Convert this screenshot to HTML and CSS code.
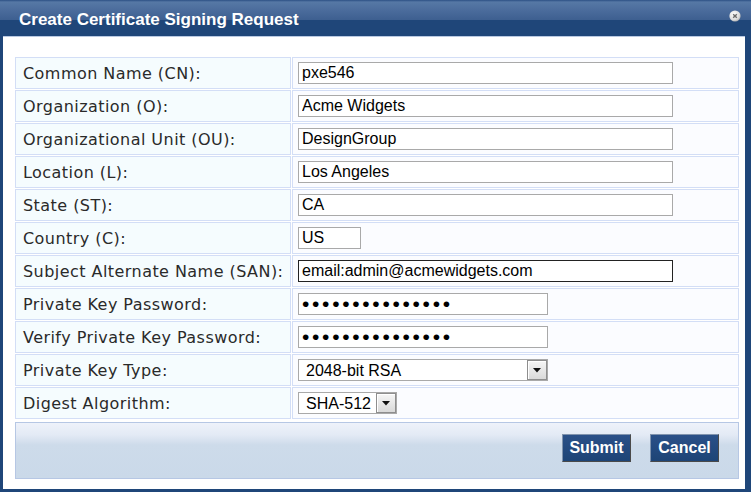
FILE: index.html
```html
<!DOCTYPE html>
<html>
<head>
<meta charset="utf-8">
<link rel="stylesheet" href="styles.css">
</head>
<body>
<div class="dialog">
  <div class="titlebar">
    <span class="title">Create Certificate Signing Request</span>
    <span class="close"><svg width="12" height="12" viewBox="0 0 12 12"><defs><radialGradient id="cg" cx="0.4" cy="0.35" r="0.7"><stop offset="0" stop-color="#ffffff"/><stop offset="0.7" stop-color="#dcdcdc"/><stop offset="1" stop-color="#a8a8a8"/></radialGradient></defs><circle cx="6" cy="6" r="5.6" fill="url(#cg)"/><path d="M4.2 4.2 L7.8 7.8 M7.8 4.2 L4.2 7.8" stroke="#6a6a6a" stroke-width="1.4"/></svg></span>
  </div>
  <div class="content">
    <table class="form">
      <tr><td class="lbl">Common Name (CN):</td><td class="val"><input class="txt wide" type="text" value="pxe546"></td></tr>
      <tr><td class="lbl">Organization (O):</td><td class="val"><input class="txt wide" type="text" value="Acme Widgets"></td></tr>
      <tr><td class="lbl">Organizational Unit (OU):</td><td class="val"><input class="txt wide" type="text" value="DesignGroup"></td></tr>
      <tr><td class="lbl">Location (L):</td><td class="val"><input class="txt wide" type="text" value="Los Angeles"></td></tr>
      <tr><td class="lbl">State (ST):</td><td class="val"><input class="txt wide" type="text" value="CA"></td></tr>
      <tr><td class="lbl">Country (C):</td><td class="val"><input class="txt short" type="text" value="US"></td></tr>
      <tr><td class="lbl">Subject Alternate Name (SAN):</td><td class="val"><input class="txt wide focus" type="text" value="email:admin@acmewidgets.com"></td></tr>
      <tr><td class="lbl">Private Key Password:</td><td class="val"><input class="txt pw" type="password" value="passwordpasswor"></td></tr>
      <tr><td class="lbl">Verify Private Key Password:</td><td class="val"><input class="txt pw" type="password" value="passwordpasswor"></td></tr>
      <tr><td class="lbl">Private Key Type:</td><td class="val"><span class="sel sel-wide"><select><option>2048-bit RSA</option></select><span class="arrow"><svg width="8" height="5" viewBox="0 0 8 5"><path d="M0 0 H8 L4 4.5 Z" fill="#111"/></svg></span></span></td></tr>
      <tr><td class="lbl">Digest Algorithm:</td><td class="val"><span class="sel sel-short"><select><option>SHA-512</option></select><span class="arrow"><svg width="8" height="5" viewBox="0 0 8 5"><path d="M0 0 H8 L4 4.5 Z" fill="#111"/></svg></span></span></td></tr>
    </table>
    <div class="footer">
      <button class="btn">Submit</button>
      <button class="btn">Cancel</button>
    </div>
  </div>
</div>
</body>
</html>
```
FILE: styles.css
```css
html, body {
  margin: 0;
  padding: 0;
}
body {
  background: #1f4679;
  width: 751px;
  height: 492px;
  overflow: hidden;
}
.dialog {
  display: flex;
  flex-direction: column;
  height: 492px;
}
.titlebar {
  height: 36px;
  flex: none;
  box-sizing: border-box;
  display: flex;
  align-items: center;
  justify-content: space-between;
  padding: 0 10px 0 19px;
  background: linear-gradient(to bottom, #2c5084 0px, #5678a5 2px, #4a6b9b 11px, #3d5f90 20px, #1f4679 20px, #1f4679 36px);
}
.title {
  color: #fff;
  font-family: "Liberation Sans", Arial, sans-serif;
  font-weight: bold;
  font-size: 17px;
  padding-top: 4px;
}
.close {
  display: flex;
  margin-top: -4px;
}
.content {
  background: #fff;
  margin: 0 6px 4px 3px;
  padding: 19px 5px 10px 11px;
  flex: 1;
  border-top: 1px solid #b9c9e2;
}
.form {
  border-collapse: separate;
  border-spacing: 1px;
  width: 726px;
}
.form td {
  height: 30px;
  padding: 0;
  border: 1px solid #d3def6;
}
.lbl {
  width: 267px;
  background: #f5fcfe;
  padding-left: 7px !important;
  font-family: "DejaVu Sans", Verdana, sans-serif;
  font-size: 16px;
  color: #2a2a2a;
  letter-spacing: 0.45px;
  white-space: nowrap;
}
.val {
  background: #fbfcff;
  padding-left: 5px !important;
}
.txt {
  box-sizing: border-box;
  height: 22px;
  border: 1px solid #a9a9a9;
  padding: 0 3px;
  margin: 0;
  font-family: "Liberation Sans", Arial, sans-serif;
  font-size: 16px;
  color: #000;
  background: #fff;
  display: block;
  outline: none;
}
.wide { width: 375px; }
.short { width: 63px; }
.pw {
  width: 250px;
  font-size: 21px;
  letter-spacing: 2.7px;
  padding-left: 3px;
}
.focus { border-color: #222; }
.sel {
  position: relative;
  display: block;
  height: 22px;
}
.sel-wide { width: 250px; }
.sel-short { width: 99px; }
.sel select {
  -webkit-appearance: none;
  appearance: none;
  box-sizing: border-box;
  width: 100%;
  height: 22px;
  border: 1px solid #a9a9a9;
  background: #fff;
  padding: 0 0 0 7px;
  margin: 0;
  font-family: "Liberation Sans", Arial, sans-serif;
  font-size: 16px;
  color: #000;
  display: block;
  outline: none;
}
.arrow {
  position: absolute;
  right: 1px;
  top: 1px;
  width: 18px;
  height: 18px;
  border: 1px solid #8e8e8e;
  box-shadow: inset 1px 1px 0 #fff;
  background: linear-gradient(to bottom, #f6f6f6, #d9d9d9);
  display: flex;
  align-items: center;
  justify-content: center;
}
.footer {
  box-sizing: border-box;
  margin: 2px 1px 0 1px;
  height: 57px;
  border: 1px solid #b6c7e4;
  background: linear-gradient(to bottom, #eef2fa 0px, #e3eaf5 12px, #cddbea 22px, #cad9e9 100%);
  display: flex;
  justify-content: flex-end;
  align-items: flex-start;
  gap: 19px;
  padding: 11px 19px 0 0;
}
.btn {
  height: 28px;
  width: 69px;
  padding: 0;
  background: linear-gradient(to bottom, #2a5088, #1d4476);
  color: #fff;
  font-family: "Liberation Sans", Arial, sans-serif;
  font-weight: bold;
  font-size: 16px;
  border: 1px solid;
  border-color: #8093ad #4a4a4a #4a4a4a #8093ad;
}
```
